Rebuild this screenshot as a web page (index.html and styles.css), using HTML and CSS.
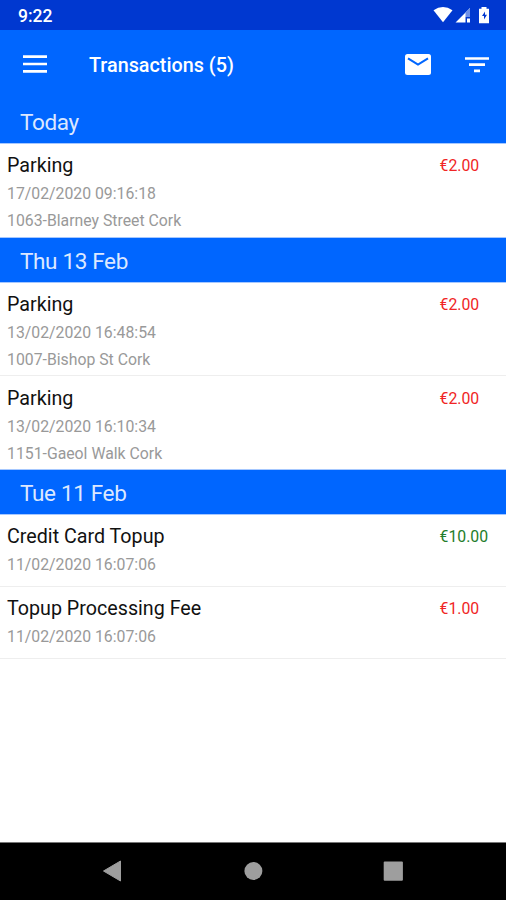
FILE: index.html
```html
<!DOCTYPE html>
<html lang="en">
<head>
<meta charset="utf-8">
<title>Transactions</title>
<link rel="stylesheet" href="styles.css">
</head>
<body>
<div class="screen">
  <div class="status">
    <span class="clock">9:22</span>
    <svg class="status-icons" width="60" height="20" viewBox="433 5 60 20">
      <path d="M433.500 10.300Q443 3.700 452.500 10.300L443 22.300Z" fill="#fff"/>
      <path d="M470 8V17H465.500V22.500H455.500Z" fill="#fff"/>
      <path d="M470 8V17H465.500V12.500Z" fill="#6d8fe8"/>
      <path d="M467 18.500h3v4h-3z" fill="#fff"/>
      <path d="M481.500 7h5v1.800h2.500v14.400h-10V8.800h2.500z" fill="#fff"/>
      <path d="M485 11.500l-3 4.500h2v3.500l3-4.800h-2z" fill="#0038d0"/>
    </svg>
  </div>
  <header class="toolbar">
    <svg class="menu" width="24" height="18" viewBox="0 0 24 18"><path d="M0 1.600H24M0 9H24M0 16.400H24" stroke="#fff" stroke-width="2.700"/></svg>
    <h1>Transactions (5)</h1>
    <svg class="mail" width="26" height="21" viewBox="0 0 26 21"><rect width="26" height="21" rx="2.500" fill="#fff"/><path d="M3 4.300L13 10.600L23 4.300" fill="none" stroke="#06f" stroke-width="2.100"/></svg>
    <svg class="filter" width="24" height="17" viewBox="0 0 24 17"><path d="M0 2.500H24M4 8.700H20M9 14.900H15" stroke="#fff" stroke-width="2.700"/></svg>
  </header>
  <main>
    <h2>Today</h2>
    <section class="row tall last"><div><h3>Parking</h3><p>17/02/2020 09:16:18</p><p>1063-Blarney Street Cork</p></div><span class="amount">€2.00</span></section>
    <h2>Thu 13 Feb</h2>
    <section class="row tall"><div><h3>Parking</h3><p>13/02/2020 16:48:54</p><p>1007-Bishop St Cork</p></div><span class="amount">€2.00</span></section>
    <section class="row tall last"><div><h3>Parking</h3><p>13/02/2020 16:10:34</p><p>1151-Gaeol Walk Cork</p></div><span class="amount">€2.00</span></section>
    <h2>Tue 11 Feb</h2>
    <section class="row short"><div><h3>Credit Card Topup</h3><p>11/02/2020 16:07:06</p></div><span class="amount credit">€10.00</span></section>
    <section class="row"><div><h3>Topup Processing Fee</h3><p>11/02/2020 16:07:06</p></div><span class="amount">€1.00</span></section>
  </main>
  <nav>
    <svg width="20" height="22" viewBox="0 0 20 22"><path d="M1.500 11L18.500 1V21Z" fill="#9e9e9e" stroke="#9e9e9e" stroke-linejoin="round"/></svg>
    <svg width="20" height="20" viewBox="0 0 20 20"><circle cx="10.400" cy="10" r="9" fill="#9e9e9e"/></svg>
    <svg width="20" height="20" viewBox="0 0 20 20"><rect x=".7" y=".5" width="19.200" height="19.200" rx="1" fill="#9e9e9e"/></svg>
  </nav>
</div>
</body>
</html>
```
FILE: styles.css
```css
* { box-sizing: border-box; }
body { margin: 0; background: #fff; font-family: Roboto, sans-serif; }
h1, h2, h3, p { margin: 0; font-weight: 400; white-space: nowrap; }
svg { display: block; flex: none; }
.screen { display: flex; flex-direction: column; width: 506px; height: 900px; overflow: hidden; }
.status { display: flex; justify-content: space-between; height: 30px; padding: 5px 13px 0 18px; background: #0038d0; color: #fff; }
.clock { font-size: 17.5px; line-height: 22px; font-weight: 500; }
.toolbar { display: flex; align-items: center; height: 69px; padding: 0 17px 1px 23px; background: #06f; color: #fff; }
.toolbar h1 { flex: 1; margin-left: 42px; padding-top: 3px; font-size: 19.8px; line-height: 24px; font-weight: 500; }
.filter { margin-left: 34px; }
main { flex: 1; }
h2 { height: 44px; padding-left: 20px; background: #06f; color: #dce8ff; font-size: 22.5px; letter-spacing: -0.35px; line-height: 46px; }
h2 + .row { border-top: 1px solid #a6c8ff; }
.row { display: flex; justify-content: space-between; height: 72px; border-bottom: 1px solid #eee; padding: 8px 0 0 7px; }
h2 + .row { padding-top: 8px; }
.short { height: 73px; }
.tall { height: 94px; }
.tall.last { height: 95px; border-bottom-color: #a6c8ff; }
.tall + .last { height: 94px; padding-top: 9px; }
h3 { font-size: 19.7px; line-height: 27px; color: #111; }
p { font-size: 15.8px; line-height: 27px; color: #999; }
h3 + p { padding-top: 2px; line-height: 26px; }
.amount { width: 66.5px; font-size: 15.8px; line-height: 28px; color: #f02525; }
.credit { color: #237d2b; }
nav { display: flex; align-items: center; height: 58px; padding: 0 103px 2px 102px; justify-content: space-between; background: #000; border-top: 1px solid #777; }
```
